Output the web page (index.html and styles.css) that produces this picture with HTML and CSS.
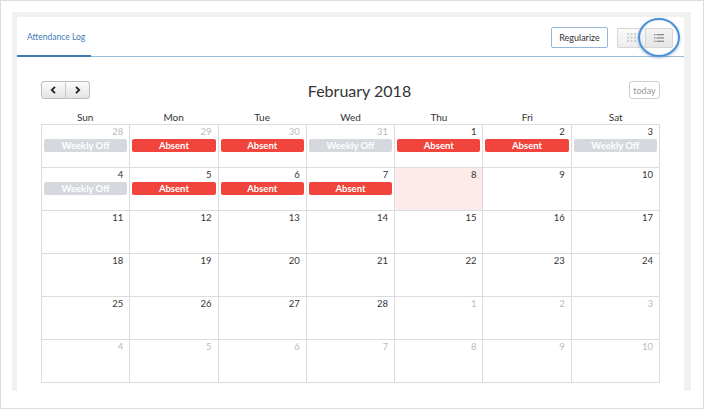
FILE: index.html
```html
<!DOCTYPE html>
<html>
<head>
<meta charset="utf-8">
<link rel="stylesheet" href="styles.css">
</head>
<body>
<div class="frame">
  <div class="panel">
    <div class="card">
      <div class="header">
        <div class="tab">Attendance Log</div>
        <div class="actions">
          <button class="btn-regularize">Regularize</button>
          <div class="toggle">
            <button class="tbtn">
              <svg width="9" height="9" viewBox="0 0 9 9"><g fill="#d0d0d0"><rect x="0" y="0" width="2" height="2"/><rect x="3.5" y="0" width="2" height="2"/><rect x="7" y="0" width="2" height="2"/><rect x="0" y="3.5" width="2" height="2"/><rect x="3.5" y="3.5" width="2" height="2"/><rect x="7" y="3.5" width="2" height="2"/><rect x="0" y="7" width="2" height="2"/><rect x="3.5" y="7" width="2" height="2"/><rect x="7" y="7" width="2" height="2"/></g></svg>
            </button>
            <button class="tbtn active">
              <svg width="10" height="8" viewBox="0 0 10 8"><g fill="#8a8a8a"><rect x="0" y="0" width="1.5" height="1.3"/><rect x="2.5" y="0" width="7.5" height="1.3"/><rect x="0" y="3.3" width="1.5" height="1.3"/><rect x="2.5" y="3.3" width="7.5" height="1.3"/><rect x="0" y="6.6" width="1.5" height="1.3"/><rect x="2.5" y="6.6" width="7.5" height="1.3"/></g></svg>
            </button>
            <span class="ring"></span>
          </div>
        </div>
      </div>
      <div class="cal">
        <div class="toolbar">
          <div class="navs">
            <button class="nav"><svg width="7" height="8" viewBox="0 0 7 8"><path d="M5 0.8 L1.8 4 L5 7.2" fill="none" stroke="#222" stroke-width="1.8"/></svg></button>
            <button class="nav"><svg width="7" height="8" viewBox="0 0 7 8"><path d="M2 0.8 L5.2 4 L2 7.2" fill="none" stroke="#222" stroke-width="1.8"/></svg></button>
          </div>
          <h2 class="title">February 2018</h2>
          <button class="today">today</button>
        </div>
        <div class="dow">
          <div>Sun</div><div>Mon</div><div>Tue</div><div>Wed</div><div>Thu</div><div>Fri</div><div>Sat</div>
        </div>
        <div class="grid">
          <div class="cell other"><span class="num">28</span><span class="ev off">Weekly Off</span></div>
          <div class="cell other"><span class="num">29</span><span class="ev abs">Absent</span></div>
          <div class="cell other"><span class="num">30</span><span class="ev abs">Absent</span></div>
          <div class="cell other"><span class="num">31</span><span class="ev off">Weekly Off</span></div>
          <div class="cell"><span class="num">1</span><span class="ev abs">Absent</span></div>
          <div class="cell"><span class="num">2</span><span class="ev abs">Absent</span></div>
          <div class="cell"><span class="num">3</span><span class="ev off">Weekly Off</span></div>

          <div class="cell"><span class="num">4</span><span class="ev off">Weekly Off</span></div>
          <div class="cell"><span class="num">5</span><span class="ev abs">Absent</span></div>
          <div class="cell"><span class="num">6</span><span class="ev abs">Absent</span></div>
          <div class="cell"><span class="num">7</span><span class="ev abs">Absent</span></div>
          <div class="cell today-cell"><span class="num">8</span></div>
          <div class="cell"><span class="num">9</span></div>
          <div class="cell"><span class="num">10</span></div>

          <div class="cell"><span class="num">11</span></div>
          <div class="cell"><span class="num">12</span></div>
          <div class="cell"><span class="num">13</span></div>
          <div class="cell"><span class="num">14</span></div>
          <div class="cell"><span class="num">15</span></div>
          <div class="cell"><span class="num">16</span></div>
          <div class="cell"><span class="num">17</span></div>

          <div class="cell"><span class="num">18</span></div>
          <div class="cell"><span class="num">19</span></div>
          <div class="cell"><span class="num">20</span></div>
          <div class="cell"><span class="num">21</span></div>
          <div class="cell"><span class="num">22</span></div>
          <div class="cell"><span class="num">23</span></div>
          <div class="cell"><span class="num">24</span></div>

          <div class="cell"><span class="num">25</span></div>
          <div class="cell"><span class="num">26</span></div>
          <div class="cell"><span class="num">27</span></div>
          <div class="cell"><span class="num">28</span></div>
          <div class="cell other"><span class="num">1</span></div>
          <div class="cell other"><span class="num">2</span></div>
          <div class="cell other"><span class="num">3</span></div>

          <div class="cell other"><span class="num">4</span></div>
          <div class="cell other"><span class="num">5</span></div>
          <div class="cell other"><span class="num">6</span></div>
          <div class="cell other"><span class="num">7</span></div>
          <div class="cell other"><span class="num">8</span></div>
          <div class="cell other"><span class="num">9</span></div>
          <div class="cell other"><span class="num">10</span></div>
        </div>
      </div>
    </div>
  </div>
</div>
</body>
</html>
```
FILE: styles.css
```css
* { box-sizing: border-box; }
html, body { margin: 0; padding: 0; background: #fff; }
body {
  font-family: "Lato", "Open Sans", "Liberation Sans", sans-serif;
  color: #333;
}
.frame {
  width: 704px;
  height: 409px;
  border: 1px solid #dcdcdc;
  padding: 11px 12px 17px 11px;
}
.panel {
  background: #f1f1f1;
  height: 100%;
  padding: 5px 7px 0 5px;
  display: flex;
}
.card {
  background: #fff;
  flex: 1;
  display: flex;
  flex-direction: column;
}
.header {
  height: 40px;
  display: flex;
  align-items: center;
  justify-content: space-between;
  border-bottom: 1px solid #9dbcd8;
  position: relative;
}
.tab {
  height: 100%;
  display: flex;
  align-items: center;
  padding: 0 10px;
  width: 74px;
  font-size: 8.5px;
  color: #3f7bb6;
  white-space: nowrap;
  border-bottom: 2px solid #3f7bb6;
  margin-bottom: -1px;
  padding-top: 1px;
}
.actions {
  display: flex;
  align-items: center;
  gap: 9px;
  padding-right: 11px;
  padding-top: 2px;
}
button { font-family: inherit; cursor: pointer; }
.btn-regularize {
  width: 57px;
  height: 21px;
  border: 1px solid #92b9db;
  border-radius: 2px;
  background: #fff;
  font-size: 9px;
  color: #333;
  padding: 0;
}
.toggle {
  display: flex;
  position: relative;
}
.tbtn {
  width: 28px;
  height: 20px;
  border: 1px solid #d6d6d6;
  background: linear-gradient(#fbfbfb, #ececec);
  padding: 0;
  display: flex;
  align-items: center;
  justify-content: center;
}
.tbtn:first-child { border-radius: 2px 0 0 2px; border-right: none; }
.tbtn.active { border-radius: 0 2px 2px 0; background: linear-gradient(#f3f3f3, #e6e6e6); }
.ring {
  position: absolute;
  left: 21px;
  top: -10px;
  width: 42px;
  height: 39px;
  border: 2px solid #4a8fd8;
  border-radius: 50%;
  box-shadow: 0 1px 3px rgba(60,110,170,0.45), inset 0 0 2px rgba(60,110,170,0.3);
  pointer-events: none;
}
.cal {
  padding: 24px 24px 0 24px;
}
.toolbar {
  display: flex;
  align-items: center;
  justify-content: space-between;
  height: 18px;
}
.navs {
  display: flex;
  width: 49px;
}
.nav {
  flex: 1;
  height: 18px;
  padding: 0;
  border: 1px solid #bdbdbd;
  background: linear-gradient(#fbfbfb, #e4e4e4);
  display: flex;
  align-items: center;
  justify-content: center;
}
.nav:first-child { border-radius: 3px 0 0 3px; }
.nav:last-child { border-radius: 0 3px 3px 0; border-left: 1px solid #c8c8c8; margin-left: -1px; }
.title {
  margin: 0;
  font-size: 16px;
  font-weight: 400;
  color: #333;
  padding-right: 0;
}
.today {
  width: 31px;
  height: 18px;
  border: 1px solid #cfcfcf;
  border-radius: 3px;
  background: #fff;
  color: #999;
  font-size: 9px;
  padding: 0;
}
.dow {
  display: grid;
  grid-template-columns: repeat(7, 1fr);
  margin-top: 11px;
  height: 14px;
  font-size: 10px;
  text-align: center;
  color: #333;
  line-height: 14px;
}
.grid {
  display: grid;
  grid-template-columns: repeat(7, 1fr);
  grid-auto-rows: 43px;
  border-top: 1px solid #dcdcdc;
  border-left: 1px solid #dcdcdc;
}
.cell {
  border-right: 1px solid #dcdcdc;
  border-bottom: 1px solid #dcdcdc;
  display: flex;
  flex-direction: column;
  padding: 1px 2px 0 2px;
}
.num {
  text-align: right;
  font-size: 9.5px;
  line-height: 12px;
  padding-right: 4px;
  color: #333;
}
.other .num { color: #bbb; }
.today-cell { background: #fdeaea; }
.ev {
  margin-top: 1px;
  height: 13px;
  border-radius: 2px;
  color: #fff;
  font-size: 9.5px;
  font-weight: 700;
  text-align: center;
  line-height: 13px;
}
.abs { background: #f1443c; }
.off { background: #d5d8dc; }
```
